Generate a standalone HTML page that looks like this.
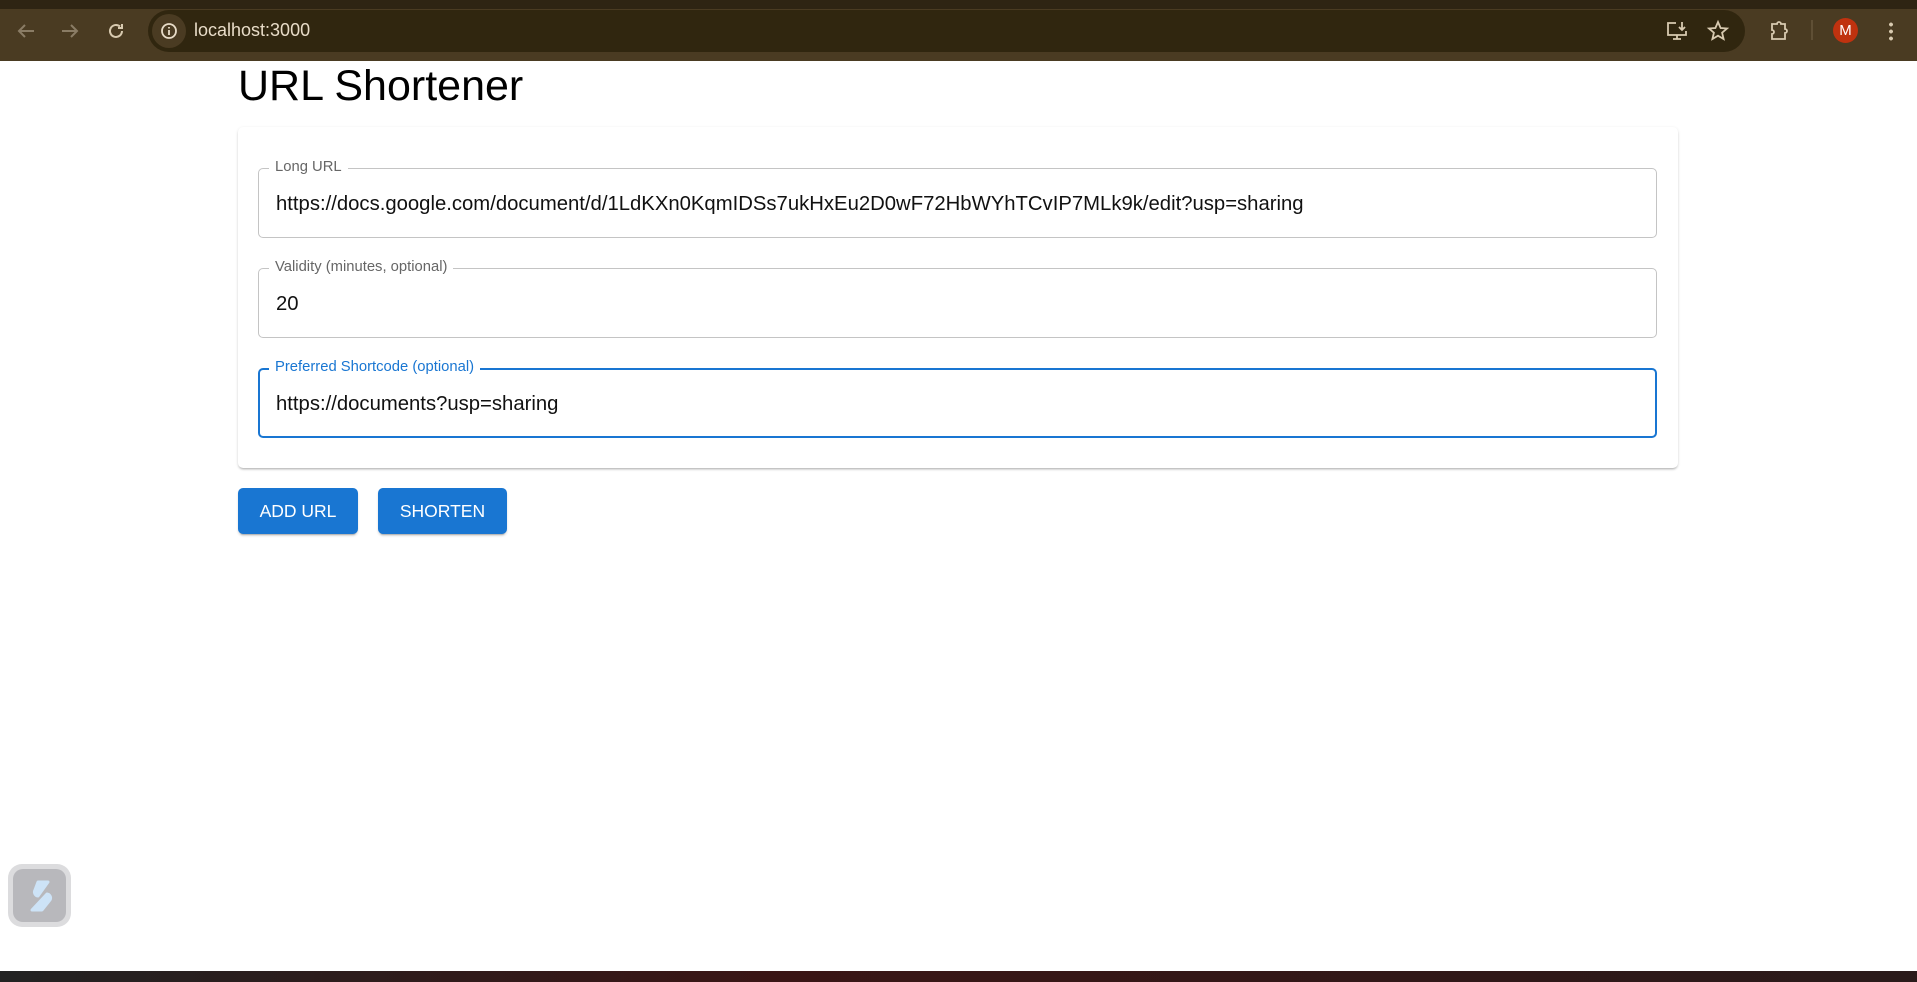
<!DOCTYPE html>
<html><head><meta charset="utf-8"><style>
*{box-sizing:border-box;margin:0;padding:0}
body{width:1917px;height:982px;overflow:hidden;background:#fff;font-family:"Liberation Sans",Arial,sans-serif;position:relative}
.top{position:absolute;left:0;top:0;width:1917px;height:61px;background:#4a3b22}
.tabline{position:absolute;left:0;top:0;width:1917px;height:9px;background:#2e2413}
.omni{position:absolute;left:148px;top:10px;width:1597px;height:42px;border-radius:21px;background:#30260f}
.info{position:absolute;left:152px;top:14px;width:34px;height:34px;border-radius:17px;background:#4a3b22}
.url{position:absolute;left:194px;top:20px;color:#e8dcc8;font-size:18px}
.ic{position:absolute;color:#cdbfa6}
h1{position:absolute;left:238px;top:62px;font-weight:400;font-size:43px;color:#000}
.card{position:absolute;left:238px;top:127px;width:1440px;height:341px;border-radius:5px;background:#fff;box-shadow:0 2px 2px -1px rgba(0,0,0,.25),0 1px 3px rgba(0,0,0,.12)}
.f{position:absolute;left:258px;width:1399px;height:70px;border:1px solid #c4c4c4;border-radius:5px}
.f.focus{border:2px solid #1976d2}
.lab{position:absolute;left:10px;top:-10px;background:#fff;padding:0 6px;font-size:14.8px;color:#666}
.focus .lab{color:#1976d2;left:9px;top:-11px}
.val{position:absolute;left:17px;top:24px;font-size:20.3px;color:#111}
.focus .val{left:16px;top:23px}
.btn{position:absolute;top:488px;height:46px;background:#1976d2;color:#fff;font-size:17.5px;border-radius:5px;text-align:center;line-height:46px;box-shadow:0 3px 1px -2px rgba(0,0,0,.2),0 2px 2px rgba(0,0,0,.14)}
.task{position:absolute;left:0;top:971px;width:1917px;height:11px;background:linear-gradient(90deg,#222,#3a1515 40%,#2a1a1a)}
.float{position:absolute;left:8px;top:864px;width:63px;height:63px;border-radius:14px;background:#dcdcde}
.float i{position:absolute;left:5px;top:5px;width:53px;height:53px;border-radius:10px;background:#b8b8bc}
</style></head><body>
<div class="top"></div><div class="tabline"></div>
<svg class="ic" style="left:14px;top:19px" width="24" height="24" viewBox="0 0 24 24"><path d="M20 12H5M11 6l-6 6 6 6" stroke="#8a7c65" stroke-width="2" fill="none"/></svg>
<svg class="ic" style="left:58px;top:19px" width="24" height="24" viewBox="0 0 24 24"><path d="M4 12h15M13 6l6 6-6 6" stroke="#8a7c65" stroke-width="2" fill="none"/></svg>
<svg class="ic" style="left:104px;top:19px" width="24" height="24" viewBox="0 0 24 24"><path d="M18 12a6 6 0 1 1-2-4.5M18 5v4h-4" stroke="#d8cab0" stroke-width="2" fill="none"/></svg>
<div class="omni"></div><div class="info"></div>
<svg style="position:absolute;left:160px;top:22px" width="18" height="18" viewBox="0 0 18 18"><circle cx="9" cy="9" r="7" stroke="#e8dcc8" stroke-width="1.8" fill="none"/><path d="M9 8v5M9 5v1.5" stroke="#e8dcc8" stroke-width="1.8"/></svg>
<div class="url">localhost:3000</div>
<svg style="position:absolute;left:1665px;top:19px" width="24" height="24" viewBox="0 0 24 24"><path d="M11 4H3v12h18v-4M8 20h8M12 16v4M17 3v8M14 8l3 3 3-3" stroke="#d8cab0" stroke-width="1.8" fill="none"/></svg>
<svg style="position:absolute;left:1706px;top:19px" width="24" height="24" viewBox="0 0 24 24"><path d="M12 3l2.6 6 6.4.5-4.9 4.2 1.5 6.3L12 16.7 6.4 20l1.5-6.3L3 9.5l6.4-.5z" stroke="#d8cab0" stroke-width="1.8" fill="none"/></svg>
<svg style="position:absolute;left:1767px;top:19px" width="24" height="24" viewBox="0 0 24 24"><path d="M5 5h5a2 2 0 0 1 4 0h4v5a2 2 0 0 1 0 4v6H5v-5a2 2 0 0 0 0-4z" stroke="#d8cab0" stroke-width="1.8" fill="none"/></svg>
<div style="position:absolute;left:1811px;top:20px;width:2px;height:20px;background:#5f4f35"></div>
<div style="position:absolute;left:1833px;top:18px;width:25px;height:25px;border-radius:50%;background:#c0320f;color:#fff;font-size:15px;text-align:center;line-height:25px">M</div>
<div style="position:absolute;left:1889px;top:21px;width:4px;height:20px;background:radial-gradient(circle,#d8cab0 1.8px,transparent 2px) 0 0/4px 7px"></div>
<h1>URL Shortener</h1>
<div class="card"></div>
<div class="f" style="top:168px"><span class="lab">Long URL</span><span class="val">https://docs.google.com/document/d/1LdKXn0KqmIDSs7ukHxEu2D0wF72HbWYhTCvIP7MLk9k/edit?usp=sharing</span></div>
<div class="f" style="top:268px"><span class="lab">Validity (minutes, optional)</span><span class="val">20</span></div>
<div class="f focus" style="top:368px"><span class="lab">Preferred Shortcode (optional)</span><span class="val">https://documents?usp=sharing</span></div>
<div class="btn" style="left:238px;width:120px">ADD URL</div>
<div class="btn" style="left:378px;width:129px">SHORTEN</div>
<div class="float"><i></i>
<svg style="position:absolute;left:16px;top:14px" width="34" height="36" viewBox="0 0 34 36">
<path d="M14 4h10l-10 14a4 4 0 0 1 -3-6z" fill="#cde3f7" stroke="#cde3f7" stroke-width="3" stroke-linejoin="round"/>
<path d="M23 16a4 4 0 0 1 3 6l-8 10H8z" fill="#cde3f7" stroke="#cde3f7" stroke-width="3" stroke-linejoin="round"/>
</svg></div>
<div class="task"></div>
</body></html>
